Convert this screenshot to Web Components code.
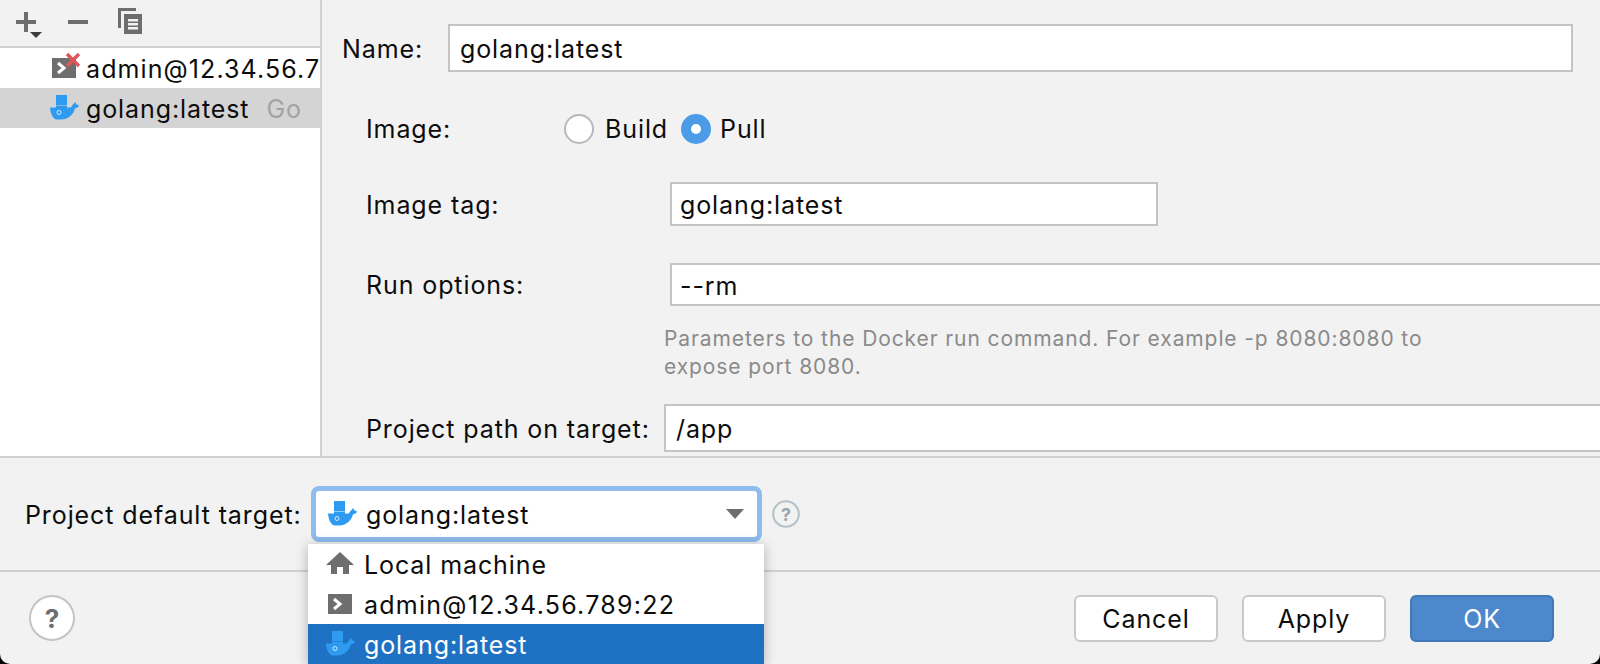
<!DOCTYPE html>
<html>
<head>
<meta charset="utf-8">
<title>Run Targets</title>
<style>
    html, body { margin: 0; height: 100%; background: #000; overflow: hidden; }
    body { font: 25px 'Inter', 'Liberation Sans', sans-serif; letter-spacing: .9px; color: #0c0c0c; }
</style>
</head>
<body>

<target-dialog>
    <tool-bar slot="tools"></tool-bar>
    <target-row slot="targets" icon="terminal" badge wide>admin@12.34.56.7</target-row>
    <target-row slot="targets" icon="docker" hint="Go" selected>golang:latest</target-row>

    <form-row slot="form" label="Name:" indent="20" labelwidth="106" height="48" top="24">
        <text-field value="golang:latest" width="1125"></text-field>
    </form-row>
    <form-row slot="form" label="Image:" indent="44" labelwidth="198" height="30" top="42" flat>
        <radio-option>Build</radio-option>
        <radio-option checked>Pull</radio-option>
    </form-row>
    <form-row slot="form" label="Image tag:" indent="44" labelwidth="304" height="44" top="38">
        <text-field value="golang:latest" width="488" pad="8"></text-field>
    </form-row>
    <form-row slot="form" label="Run options:" indent="44" labelwidth="304" height="43" top="37" flat>
        <text-field value="--rm" width="960" pad="8"></text-field>
    </form-row>
    <help-text slot="form">Parameters to the Docker run command. For example -p 8080:8080 to<br>expose port 8080.</help-text>
    <form-row slot="form" label="Project path on target:" indent="44" labelwidth="298" height="48" top="23">
        <text-field value="/app" width="960"></text-field>
    </form-row>

    <target-select slot="default-target" label="Project default target:" value="golang:latest">
        <popup-item icon="home">Local machine</popup-item>
        <popup-item icon="terminal" wide>admin@12.34.56.789:22</popup-item>
        <popup-item icon="docker" selected>golang:latest</popup-item>
    </target-select>

    <help-button slot="footer-left"></help-button>
    <dialog-button slot="footer-right">Cancel</dialog-button>
    <dialog-button slot="footer-right">Apply</dialog-button>
    <dialog-button slot="footer-right" primary>OK</dialog-button>
</target-dialog>

<script>
// icons shared by list rows, the combo box and its popup
const ICONS = {
    docker: `<svg width="30" height="26" viewBox="0 0 30 26">
        <rect x="6" y="0" width="11" height="10" fill="#2f9bf0"/>
        <path fill="#2f9bf0" d="M0 12.500H6V10.500H17V12.500H21C21.500 10.500 23 9.500 24 8.500C24.600 7.600 25.200 7 25.600 7.400L26.200 9.600C27 9.500 28.400 10 29 10.800C28.400 12.200 26.600 13.200 25 13.200C23.800 18.400 19.200 24.500 11 24.500H7C3 24.500 .3 18 0 12.500Z"/>
        <circle cx="9" cy="17.500" r="2" fill="none" stroke="#fff" stroke-opacity=".75" stroke-width="1"/>
    </svg>`,
    terminal: `<svg width="24" height="20" viewBox="0 0 24 20">
        <rect width="24" height="20" fill="#6e6e6e"/>
        <path d="M6 5L12 10L6 15" fill="none" stroke="#fff" stroke-width="3"/>
    </svg>`,
    home: `<svg width="28" height="24" viewBox="0 0 28 24">
        <path fill="#6e6e6e" d="M14 0L28 13H23V22H17V15H11V22H5V13H0Z"/>
    </svg>`
};

class ToolBar extends HTMLElement {
    constructor() {
        super();
        this.attachShadow({mode: 'open'});
        this.shadowRoot.innerHTML = `
            <style>
                :host { display: flex; height: 46px; border-bottom: 2px solid #d1d1d1; background: #f2f2f2; }
                svg { display: block; }
            </style>
            <svg width="150" height="46" viewBox="0 0 150 46">
                <path fill="#6e6e6e" d="M24 12h4v8h8v4h-8v8h-4v-8h-8v-4h8z"/>
                <path fill="#3c3c3c" d="M30 32h12l-6 6z"/>
                <rect x="68" y="20" width="20" height="4" fill="#6e6e6e"/>
                <path fill="#6e6e6e" d="M118 8h18v3h-15v17h-3z"/>
                <path fill="#6e6e6e" fill-rule="evenodd" d="M124 14h18v20h-18zM128 19v2.500h10v-2.500zM128 23v2.500h10v-2.500zM128 27v2.500h10v-2.500z"/>
            </svg>
        `;
    }
}

class TargetRow extends HTMLElement {
    constructor() {
        super();
        this.attachShadow({mode: 'open'});
    }

    connectedCallback() {
        const icon = this.getAttribute('icon');
        const hint = this.getAttribute('hint');
        const badge = this.hasAttribute('badge') ? `
            <svg class="badge" width="16" height="16" viewBox="0 0 16 16">
                <path d="M2 2L14 14M14 2L2 14" stroke="#e05555" stroke-width="3.400"/>
            </svg>` : '';
        this.shadowRoot.innerHTML = `
            <style>
                :host { display: flex; align-items: center; height: 40px; white-space: nowrap; overflow: hidden; }
                :host([selected]) { background: #d4d4d4; }
                :host([wide]) { letter-spacing: 1.100px; }
                span { flex: none; }
                .icon { position: relative; width: 36px; margin-left: 50px; display: flex; }
                :host([icon=terminal]) .icon { padding-left: 2px; width: 34px; }
                .badge { position: absolute; left: 15px; top: -6px; }
                .text { padding-top: 2px; }
                .hint { color: #a3a3a3; margin-left: 17px; padding-top: 2px; }
            </style>
            <span class="icon">${ICONS[icon]}${badge}</span>
            <span class="text"><slot></slot></span>
            ${hint ? `<span class="hint">${hint}</span>` : ''}
        `;
    }
}

class FormRow extends HTMLElement {
    constructor() {
        super();
        this.attachShadow({mode: 'open'});
    }

    connectedCallback() {
        const indent = this.getAttribute('indent');
        const labelWidth = this.getAttribute('labelwidth');
        this.shadowRoot.innerHTML = `
            <style>
                :host {
                    display: flex; align-items: center; white-space: nowrap;
                    height: ${this.getAttribute('height')}px;
                    margin-top: ${this.getAttribute('top')}px;
                    padding-left: ${indent}px;
                }
                .label { flex: none; width: ${labelWidth}px; padding-top: 2px; }
                :host([flat]) .label { padding-top: 0; }
                .body { display: flex; align-self: stretch; align-items: center; }
            </style>
            <span class="label">${this.getAttribute('label')}</span>
            <span class="body"><slot></slot></span>
        `;
    }
}

class TextField extends HTMLElement {
    constructor() {
        super();
        this.attachShadow({mode: 'open'});
    }

    connectedCallback() {
        const pad = this.getAttribute('pad') || 10;
        this.shadowRoot.innerHTML = `
            <style>
                :host {
                    display: flex; align-items: center; box-sizing: border-box; align-self: stretch;
                    flex: none; width: ${this.getAttribute('width')}px;
                    background: #fff; border: 2px solid #c4c4c4; padding: 2px 0 0 ${pad}px;
                }
            </style>
            <span>${this.getAttribute('value')}</span>
        `;
    }
}

class RadioOption extends HTMLElement {
    constructor() {
        super();
        this.attachShadow({mode: 'open'});
        this.shadowRoot.innerHTML = `
            <style>
                :host { display: inline-flex; align-items: center; gap: 11px; margin-right: 13px; }
                :host([checked]) { gap: 9px; }
                .dot { box-sizing: border-box; width: 30px; height: 30px; border-radius: 50%; background: #fff; border: 2px solid #b8b8b8; }
                :host([checked]) .dot { background: #4b9be6; border: 10px solid #4b9be6; }
                :host([checked]) .dot::after { content: ''; display: block; width: 10px; height: 10px; border-radius: 50%; background: #fff; }
            </style>
            <span class="dot"></span><span><slot></slot></span>
        `;
    }
}

class HelpText extends HTMLElement {
    constructor() {
        super();
        this.attachShadow({mode: 'open'});
        this.shadowRoot.innerHTML = `
            <style>
                :host { display: block; margin: 19px 0 0 342px; font-size: 21px; letter-spacing: .9px; line-height: 28px; height: 56px; color: #8a8a8a; white-space: nowrap; }
            </style>
            <slot></slot>
        `;
    }
}

class TargetSelect extends HTMLElement {
    constructor() {
        super();
        this.attachShadow({mode: 'open'});
    }

    connectedCallback() {
        this.shadowRoot.innerHTML = `
            <style>
                :host { display: flex; align-items: center; height: 112px; padding-left: 25px; white-space: nowrap; }
                .label { width: 286px; flex: none; padding-top: 2px; }
                .wrap { position: relative; display: flex; align-items: center; }
                .box {
                    box-sizing: border-box; width: 451px; height: 56px;
                    display: flex; align-items: center; padding-left: 12px; gap: 8px;
                    background: #fff; border: 5px solid #8ebcee; border-radius: 8px;
                }
                .box span { flex: 1; padding-top: 2px; }
                .arrow { margin-right: 13px; }
                .hint { margin-left: 10px; display: block; }
                .hint text { letter-spacing: 0; }
                .popup {
                    position: absolute; left: -3px; top: 58px; width: 456px; height: 120px;
                    background: #fff; box-shadow: 0 2px 12px rgba(0,0,0,.28); z-index: 2;
                }
            </style>
            <span class="label">${this.getAttribute('label')}</span>
            <div class="wrap">
                <div class="box">
                    ${ICONS.docker}
                    <span>${this.getAttribute('value')}</span>
                    <svg class="arrow" width="18" height="10" viewBox="0 0 18 10"><path fill="#6e6e6e" d="M0 0H18L9 10Z"/></svg>
                </div>
                <svg class="hint" width="28" height="28" viewBox="0 0 28 28">
                    <circle cx="14" cy="14" r="12.800" fill="none" stroke="#b4c0c8" stroke-width="2"/>
                    <text x="14" y="20.500" text-anchor="middle" font-size="18" font-weight="700" fill="#9aa5ad" font-family="Inter, sans-serif">?</text>
                </svg>
                <div class="popup"><slot></slot></div>
            </div>
        `;
    }
}

class PopupItem extends HTMLElement {
    constructor() {
        super();
        this.attachShadow({mode: 'open'});
    }

    connectedCallback() {
        this.shadowRoot.innerHTML = `
            <style>
                :host { display: flex; align-items: center; height: 40px; }
                :host([selected]) { background: #1f72c3; color: #fff; }
                :host([wide]) { letter-spacing: 1.250px; }
                .icon { width: 38px; margin-left: 18px; display: flex; }
                :host([icon=terminal]) .icon { margin-left: 20px; width: 36px; }
                .text { padding-top: 2px; }
            </style>
            <span class="icon">${ICONS[this.getAttribute('icon')]}</span>
            <span class="text"><slot></slot></span>
        `;
    }
}

class HelpButton extends HTMLElement {
    constructor() {
        super();
        this.attachShadow({mode: 'open'});
        this.shadowRoot.innerHTML = `
            <style>
                :host {
                    display: flex; align-items: center; justify-content: center; box-sizing: border-box;
                    width: 46px; height: 46px; border-radius: 50%; background: #fff; border: 2px solid #c4c4c4;
                    font-weight: 700; font-size: 26px; letter-spacing: 0; color: #6e6e6e;
                }
            </style>
            <span>?</span>
        `;
    }
}

class DialogButton extends HTMLElement {
    constructor() {
        super();
        this.attachShadow({mode: 'open'});
        this.shadowRoot.innerHTML = `
            <style>
                :host {
                    display: flex; align-items: center; justify-content: center; box-sizing: border-box;
                    width: 144px; height: 47px; padding-top: 2px; border-radius: 6px; background: #fff; border: 2px solid #c9c9c9;
                }
                :host([primary]) { background: #4d88cc; border-color: #4178b8; color: #fff; }
            </style>
            <slot></slot>
        `;
    }
}

class TargetDialog extends HTMLElement {
    constructor() {
        super();
        this.attachShadow({mode: 'open'});
        this.shadowRoot.innerHTML = `
            <style>
                :host {
                    display: flex; flex-direction: column; height: 664px; overflow: hidden;
                    background: #f2f2f2; border-radius: 0 0 10px 10px;
                }
                .top { display: flex; height: 456px; border-bottom: 2px solid #d1d1d1; flex: none; overflow: hidden; }
                .left { flex: none; width: 320px; background: #fff; border-right: 2px solid #d1d1d1; }
                .form { flex: 1; min-width: 0; }
                .middle { flex: none; height: 112px; border-bottom: 2px solid #d1d1d1; position: relative; z-index: 1; }
                .footer { flex: 1; display: flex; align-items: center; justify-content: space-between; padding: 0 46px 0 29px; }
                .buttons { display: flex; gap: 24px; }
            </style>
            <div class="top">
                <div class="left">
                    <slot name="tools"></slot>
                    <slot name="targets"></slot>
                </div>
                <div class="form"><slot name="form"></slot></div>
            </div>
            <div class="middle"><slot name="default-target"></slot></div>
            <div class="footer">
                <slot name="footer-left"></slot>
                <div class="buttons"><slot name="footer-right"></slot></div>
            </div>
        `;
    }
}

customElements.define('tool-bar', ToolBar);
customElements.define('target-row', TargetRow);
customElements.define('form-row', FormRow);
customElements.define('text-field', TextField);
customElements.define('radio-option', RadioOption);
customElements.define('help-text', HelpText);
customElements.define('target-select', TargetSelect);
customElements.define('popup-item', PopupItem);
customElements.define('help-button', HelpButton);
customElements.define('dialog-button', DialogButton);
customElements.define('target-dialog', TargetDialog);
</script>
</body>
</html>
